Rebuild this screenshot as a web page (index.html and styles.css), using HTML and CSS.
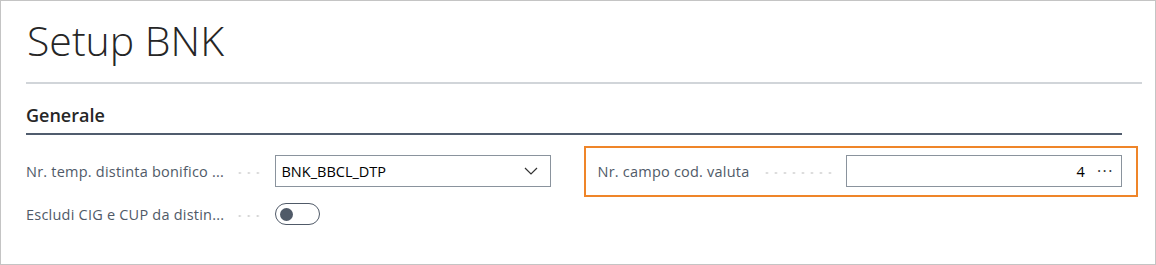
FILE: index.html
```html
<!DOCTYPE html>
<html lang="it">
<head>
    <meta charset="UTF-8">
    <title>Setup BNK</title>
    <link rel="stylesheet" href="styles.css">
</head>
<body>
    <div class="pagina">
        <!-- Titolo della pagina -->
        <h1 class="titolo">Setup BNK</h1>

        <!-- Gruppo Generale -->
        <div class="gruppo">
            <h2 class="gruppo-titolo">Generale</h2>

            <div class="campi">
                <div class="colonna">
                    <div class="campo">
                        <label class="etichetta">Nr. temp. distinta bonifico ...</label>
                        <div class="controllo select">
                            <span class="valore">BNK_BBCL_DTP</span>
                            <svg class="chevron" width="14" height="8" viewBox="0 0 14 8">
                                <path d="M1 1 L7 7 L13 1" fill="none" stroke="#333" stroke-width="1.2"/>
                            </svg>
                        </div>
                    </div>
                    <div class="campo">
                        <label class="etichetta">Escludi CIG e CUP da distin...</label>
                        <div class="toggle"><span class="pallino"></span></div>
                    </div>
                </div>

                <div class="colonna">
                    <div class="campo evidenziato">
                        <label class="etichetta">Nr. campo cod. valuta</label>
                        <div class="controllo numero">
                            <span class="valore">4</span>
                            <span class="puntini">&middot;&middot;&middot;</span>
                        </div>
                    </div>
                </div>
            </div>
        </div>
    </div>
</body>
</html>
```

FILE: styles.css
```css
/* Impostazioni generali */
body {
    margin: 0;
    font-family: "Open Sans", "Noto Sans", sans-serif;
    color: #212121;
    background: #fff;
}

/* Riquadro della pagina */
.pagina {
    box-sizing: border-box;
    width: 1156px;
    height: 265px;
    border: 1px solid #c4c4c4;
    padding: 0 13px 0 25px;
}

/* Titolo grande */
.titolo {
    margin: 0;
    padding: 12px 0 15px 1px;
    font-size: 41px;
    font-weight: 300;
    line-height: 54px;
    color: #262626;
    border-bottom: 2px solid #d1d5d9;
}

/* Gruppo di campi */
.gruppo {
    margin-right: 20px;
}

.gruppo-titolo {
    margin: 0;
    padding: 20px 0 7px 0;
    font-size: 18px;
    font-weight: 600;
    line-height: 22px;
    color: #262626;
    border-bottom: 2px solid #505c6d;
}

/* Due colonne di campi */
.campi {
    display: grid;
    grid-template-columns: 1fr 1fr;
    column-gap: 47px;
    padding-top: 20px;
}

.colonna {
    display: flex;
    flex-direction: column;
    gap: 11px;
}

.campo {
    display: flex;
    align-items: center;
    height: 32px;
    position: relative;
}

/* Etichetta con puntini di guida */
.etichetta {
    flex: 1;
    display: flex;
    align-items: center;
    font-size: 14.5px;
    letter-spacing: 0.22px;
    color: #505a68;
    white-space: nowrap;
    margin-right: 12px;
}

.etichetta::after {
    content: "";
    flex: 1;
    height: 2px;
    margin-left: 10px;
    margin-top: 3px;
    background-image: radial-gradient(circle, #cfcfcf 1px, transparent 1.2px);
    background-size: 9px 2px;
    background-position: right;
}

/* Controlli di input */
.controllo {
    box-sizing: border-box;
    width: 276px;
    height: 32px;
    border: 1px solid #8a939d;
    display: flex;
    align-items: center;
    padding: 0 6px 0 6px;
    font-size: 14.5px;
    color: #000;
}

.select .valore {
    flex: 1;
}

.chevron {
    margin-right: 6px;
}

.numero {
    justify-content: flex-end;
}

.puntini {
    margin-left: 12px;
    margin-right: 1px;
    font-size: 16px;
    letter-spacing: 1.5px;
    color: #333;
}

/* Interruttore */
.toggle {
    box-sizing: border-box;
    width: 45px;
    height: 22px;
    border: 1px solid #505a68;
    border-radius: 11px;
    display: flex;
    align-items: center;
    padding-left: 4px;
    margin-right: 231px;
}

.pallino {
    width: 13px;
    height: 13px;
    border-radius: 50%;
    background: #505a68;
}

/* Bordo arancione del campo evidenziato */
.evidenziato::before {
    content: "";
    position: absolute;
    left: -14px;
    right: -16px;
    top: -9px;
    bottom: -10px;
    border: 2px solid #ef8529;
    pointer-events: none;
}
```
